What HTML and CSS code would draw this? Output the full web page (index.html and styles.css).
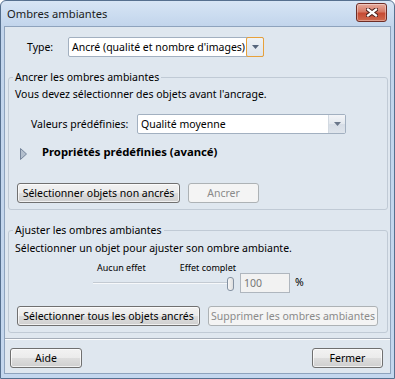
FILE: index.html
```html
<!DOCTYPE html>
<html lang="fr">

<head>
    <meta charset="UTF-8" />
    <title>Ombres ambiantes</title>
    <link rel="stylesheet" href="styles.css">
</head>

<body>
    <div class="window">
        <div class="titlebar">
            <span class="title">Ombres ambiantes</span>
            <button class="close-btn" aria-label="Fermer">
                <svg width="12" height="9" viewBox="0 0 12 9">
                    <path d="M2 1.5 L10 7.5 M10 1.5 L2 7.5" stroke="#4a1f1a" stroke-width="4.2" stroke-linecap="square" />
                    <path d="M2 1.5 L10 7.5 M10 1.5 L2 7.5" stroke="#fff" stroke-width="2.2" stroke-linecap="square" />
                </svg>
            </button>
        </div>

        <div class="client">
            <!-- type -->
            <div class="type-row">
                <span class="type-label">Type:</span>
                <div class="combo combo-type">
                    <span class="combo-text">Ancré (qualité et nombre d'images)</span>
                    <span class="combo-btn hot">
                        <svg width="7" height="4" viewBox="0 0 7 4"><path d="M0 0h7L3.5 4z" fill="#56657b" /></svg>
                    </span>
                </div>
            </div>

            <!-- anchor group -->
            <fieldset class="group group-anchor">
                <legend>Ancrer les ombres ambiantes</legend>
                <p class="note">Vous devez sélectionner des objets avant l'ancrage.</p>

                <div class="preset-row">
                    <span class="preset-label">Valeurs prédéfinies:</span>
                    <div class="combo combo-preset">
                        <span class="combo-text">Qualité moyenne</span>
                        <span class="combo-btn">
                            <svg width="7" height="4" viewBox="0 0 7 4"><path d="M0 0h7L3.5 4z" fill="#6a778a" /></svg>
                        </span>
                    </div>
                </div>

                <div class="disclosure">
                    <svg width="7" height="12" viewBox="0 0 7 12">
                        <path d="M0.5 0.5 L6.5 6 L0.5 11.5 Z" fill="#b3bfcd" stroke="#75849a" />
                    </svg>
                    <span class="disclosure-text">Propriétés prédéfinies (avancé)</span>
                </div>

                <div class="btn-row">
                    <button class="btn w-select">Sélectionner objets non ancrés</button>
                    <button class="btn w-anchor" disabled>Ancrer</button>
                </div>
            </fieldset>

            <!-- adjust group -->
            <fieldset class="group group-adjust">
                <legend>Ajuster les ombres ambiantes</legend>
                <p class="note">Sélectionner un objet pour ajuster son ombre ambiante.</p>

                <div class="slider-row">
                    <div class="slider-col">
                        <div class="tick-labels">
                            <span>Aucun effet</span>
                            <span>Effet complet</span>
                        </div>
                        <div class="slider">
                            <div class="track"></div>
                            <div class="thumb"></div>
                        </div>
                    </div>
                    <input class="num-input" type="text" value="100" disabled />
                    <span class="percent">%</span>
                </div>

                <div class="btn-row btn-row-adjust">
                    <button class="btn w-selall">Sélectionner tous les objets ancrés</button>
                    <button class="btn w-remove" disabled>Supprimer les ombres ambiantes</button>
                </div>
            </fieldset>

            <div class="separator"></div>

            <div class="footer">
                <button class="btn w-help">Aide</button>
                <button class="btn w-close">Fermer</button>
            </div>
        </div>
    </div>
</body>

</html>
```

FILE: styles.css
```css
body {
    margin: 0;
    padding: 0;
    background: #fff;
    font-family: "Noto Sans", "Open Sans", sans-serif;
    font-size: 10.5px;
    color: #000;
}

.window {
    width: 395px;
    height: 379px;
    box-sizing: border-box;
    border: 1px solid #56708f;
    border-radius: 6px 6px 0 0;
    background: linear-gradient(#d7e5f5, #c2d5ec 25px, #c4d7ee);
    padding: 0 3px 4px 3px;
    display: flex;
    flex-direction: column;
}

/* ====== Title bar ====== */
.titlebar {
    height: 25px;
    display: flex;
    align-items: flex-start;
    justify-content: space-between;
    flex-shrink: 0;
}

.title {
    margin: 5px 0 0 3px;
    font-size: 11.2px;
    line-height: 16px;
    color: #1b1b1b;
}

.close-btn {
    width: 31px;
    height: 19px;
    margin: 2px 4px 0 0;
    padding: 0;
    border: 1px solid #6e2d26;
    border-radius: 3px;
    background: linear-gradient(#e6ab9d, #d67a67 45%, #c64a33 55%, #cf6a4f);
    box-shadow: inset 0 0 0 1px rgba(255, 255, 255, 0.35);
    display: flex;
    align-items: center;
    justify-content: center;
}

/* ====== Client area ====== */
.client {
    flex: 1;
    border: 1px solid #8ea3bd;
    background: #dfe7ef;
    display: flex;
    flex-direction: column;
}

.type-row {
    display: flex;
    align-items: center;
    margin-top: 10px;
    padding-left: 22px;
    height: 20px;
}

.type-label {
    width: 41px;
}

.combo {
    display: flex;
    height: 20px;
    box-sizing: border-box;
    border: 1px solid #a2b0c0;
    border-radius: 2px;
    background: #fff;
}

.combo-type {
    width: 196px;
}

.combo-preset {
    width: 209px;
}

.combo-text {
    flex: 1;
    min-width: 0;
    overflow: hidden;
    padding-left: 3px;
    line-height: 18px;
    white-space: nowrap;
}

.combo-btn {
    flex-shrink: 0;
    width: 17px;
    box-sizing: border-box;
    border-left: 1px solid #d2d9e1;
    background: linear-gradient(#f3f5f8, #e3e8ee 50%, #d6dde6 51%, #dfe5ec);
    display: flex;
    align-items: center;
    justify-content: center;
}

.combo-btn.hot {
    width: 18px;
    margin: -1px -1px -1px 1px;
    border: 1px solid #e8a13a;
    border-radius: 2px;
    background: linear-gradient(#eef2f6, #dde4ec);
}

/* ====== Group boxes ====== */
.group {
    margin: 13px 2px 0 3px;
    padding: 3px 6px 6px 6px;
    border: 1px solid #c0cad5;
    border-radius: 3px;
    min-width: 0;
}

.group legend {
    padding: 0 2px;
    margin-left: -2px;
    line-height: 14px;
}

.note {
    margin: 0;
    line-height: 14px;
}

.group-adjust .note {
    margin-top: 1px;
}

.preset-row {
    display: flex;
    align-items: center;
    margin-top: 13px;
    padding-left: 16px;
}

.preset-label {
    width: 106px;
}

.disclosure {
    display: flex;
    align-items: center;
    margin-top: 11px;
    padding-left: 5px;
    height: 14px;
}

.disclosure svg {
    margin-top: 3px;
}

.disclosure-text {
    margin-left: 15px;
    font-size: 11.3px;
    font-weight: bold;
    line-height: 14px;
}

.btn-row {
    display: flex;
    gap: 8px;
    margin-top: 24px;
    padding-left: 2px;
}

.btn-row-adjust {
    margin-top: 13px;
}

/* ====== Buttons ====== */
.btn {
    height: 20px;
    padding: 0;
    font-family: inherit;
    font-size: 10.5px;
    line-height: 18px;
    color: #000;
    border: 1px solid #707070;
    border-radius: 3px;
    background: linear-gradient(#f2f2f2, #ebebeb 50%, #dddddd 51%, #cfcfcf);
    box-shadow: inset 0 0 0 1px rgba(255, 255, 255, 0.7);
    white-space: nowrap;
}

.btn:disabled {
    color: #8a8a8a;
    border-color: #adb2b5;
    background: #f4f4f4;
    box-shadow: none;
}

.w-select { width: 163px; }
.w-anchor { width: 71px; }
.w-selall { width: 183px; }
.w-remove { width: 170px; }
.w-help { width: 72px; }
.w-close { width: 71px; }

/* ====== Slider ====== */
.slider-row {
    display: flex;
    align-items: flex-start;
    margin-top: 7px;
}

.slider-col {
    width: 143px;
    margin-left: 78px;
}

.tick-labels {
    display: flex;
    justify-content: space-between;
    padding-left: 4px;
    font-size: 9px;
    line-height: 12px;
}

.slider {
    position: relative;
    width: 141px;
    height: 16px;
}

.track {
    position: absolute;
    left: 0;
    right: 4px;
    top: 8px;
    height: 1px;
    background: #c3cad2;
    border-bottom: 1px solid #f6f8fa;
}

.thumb {
    position: absolute;
    right: 0;
    top: 3px;
    width: 5px;
    height: 12px;
    border: 1px solid #8592a2;
    border-radius: 3px;
    background: linear-gradient(90deg, #f7f7f7, #dedede);
}

.num-input {
    width: 50px;
    height: 20px;
    box-sizing: border-box;
    margin: 11px 0 0 4px;
    padding: 0 0 0 3px;
    border: 1px solid #afb6be;
    background: #f2f2f2;
    font-family: inherit;
    font-size: 10.5px;
    color: #777;
}

.percent {
    margin: 13px 0 0 5px;
    line-height: 14px;
}

/* ====== Footer ====== */
.separator {
    margin-top: 5px;
    height: 1px;
    background: #a5adb8;
    border-bottom: 1px solid #fbfcfd;
}

.footer {
    display: flex;
    justify-content: space-between;
    margin-top: 8px;
    padding: 0 7px 0 5px;
}
```
